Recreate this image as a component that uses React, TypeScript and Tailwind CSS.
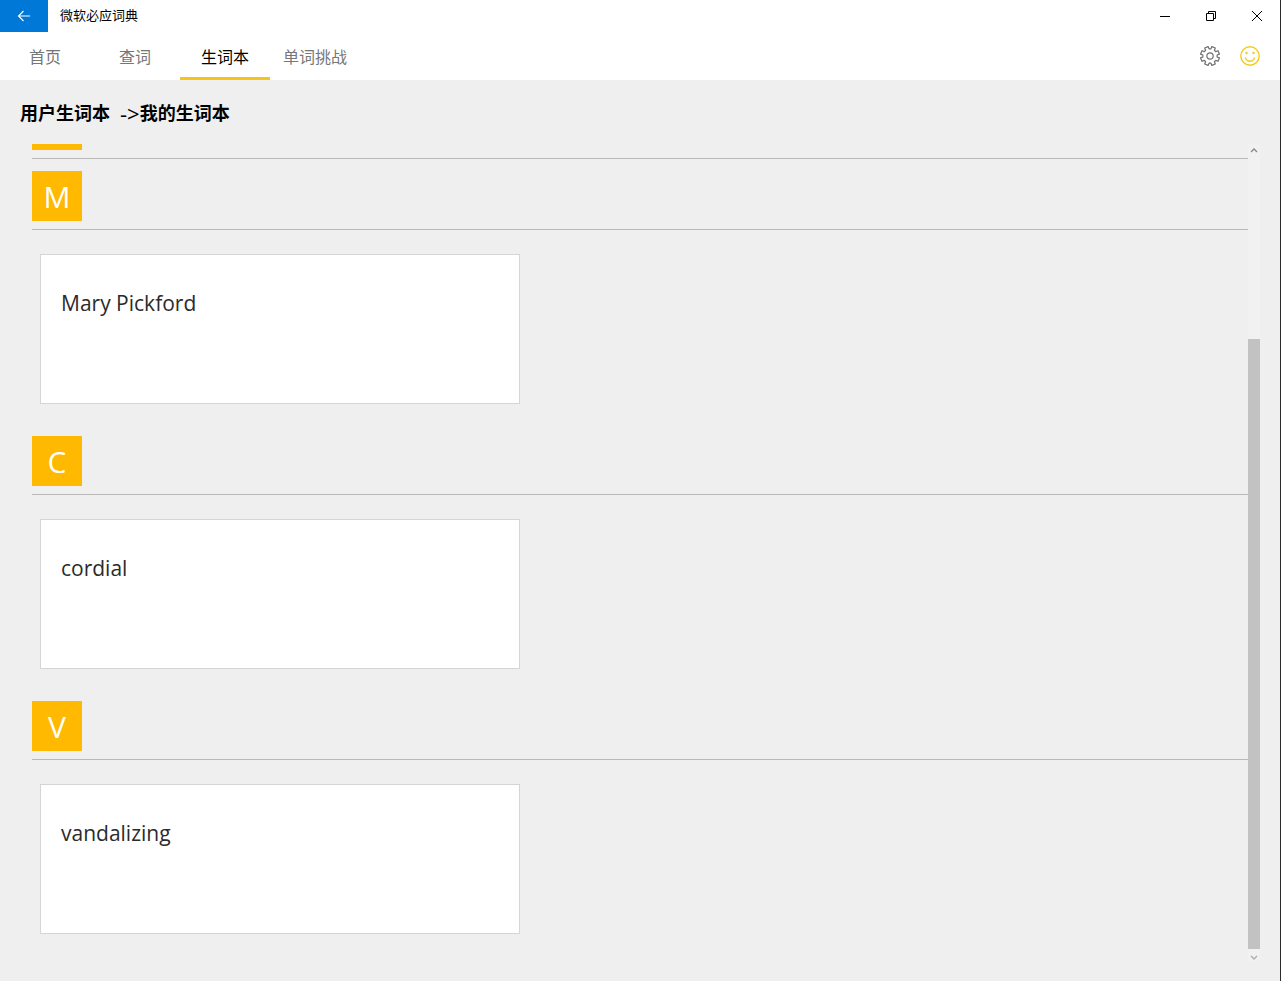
import React from 'react'

const tabs = [
  { name: '首页', active: false },
  { name: '查词', active: false },
  { name: '生词本', active: true },
  { name: '单词挑战', active: false },
]

const groups = [
  { letter: 'M', words: ['Mary Pickford'] },
  { letter: 'C', words: ['cordial'] },
  { letter: 'V', words: ['vandalizing'] },
]

// eight teeth, with a gap between two of them at the top
const gearPath = Array.from({ length: 8 }, (_, i) => {
  const point = (radius: number, degrees: number) => {
    const angle = ((i * 45 + 22.5 + degrees) * Math.PI) / 180
    return `${(10 + radius * Math.sin(angle)).toFixed(2)} ${(10 - radius * Math.cos(angle)).toFixed(2)}`
  }
  return `${i === 0 ? 'M' : 'L'}${point(7.2, -15)} L${point(9.6, -11)} L${point(9.6, 11)} L${point(7.2, 15)}`
}).join(' ') + ' Z'

const TitleBar = () => {
  return (
    <header className="flex h-8 items-center bg-white">
      <button aria-label="返回" className="flex h-8 w-12 items-center justify-center bg-[#0078d7] text-white">
        <svg width="14" height="12" viewBox="0 0 14 12" fill="none" stroke="currentColor" strokeWidth="1.1">
          <path d="M13 6H1.5M6.5 1L1.5 6l5 5" />
        </svg>
      </button>
      <span className="flex-1 pb-0.5 pl-3 text-[13px] leading-6 text-black">微软必应词典</span>
      <button aria-label="最小化" className="flex h-8 w-[46px] items-center justify-center">
        <svg width="10" height="10" viewBox="0 0 10 10" stroke="#000">
          <path d="M0 5.5h10" />
        </svg>
      </button>
      <button aria-label="还原" className="flex h-8 w-[46px] items-center justify-center">
        <svg width="10" height="10" viewBox="0 0 10 10" fill="none" stroke="#000">
          <path d="M.5 2.5h7v7h-7zM2.5 2.5v-2h7v7h-2" />
        </svg>
      </button>
      <button aria-label="关闭" className="flex h-8 w-[46px] items-center justify-center">
        <svg width="10" height="10" viewBox="0 0 10 10" stroke="#000">
          <path d="M0 0l10 10M10 0L0 10" />
        </svg>
      </button>
    </header>
  )
}

const NavBar = () => {
  return (
    <nav className="flex h-12 bg-white pr-5">
      {tabs.map((tab) => (
        <a
          key={tab.name}
          href="#"
          className={
            tab.active
              ? 'flex w-[90px] items-center justify-center border-b-3 border-[#f5c518] pt-1 text-base text-black'
              : 'flex w-[90px] items-center justify-center border-b-3 border-transparent pt-1 text-base text-[#767676]'
          }
        >
          {tab.name}
        </a>
      ))}
      <div className="ml-auto flex items-center gap-5">
        <button aria-label="设置">
          <svg width="20" height="20" viewBox="0 0 20 20" fill="none" stroke="#6f6f6f" strokeWidth="1.2" strokeLinejoin="round">
            <path d={gearPath} />
            <circle cx="10" cy="10" r="3.2" />
          </svg>
        </button>
        <button aria-label="用户">
          <svg width="20" height="20" viewBox="0 0 20 20" fill="none" stroke="#f2cb20" strokeWidth="1.4">
            <circle cx="10" cy="10" r="9.2" />
            <path d="M5.2 11.5c1 2.5 2.7 3.7 4.8 3.7s3.8-1.2 4.8-3.7" />
            <circle cx="6.5" cy="7" r="1.2" fill="#f2cb20" stroke="none" />
            <circle cx="13.5" cy="7" r="1.2" fill="#f2cb20" stroke="none" />
          </svg>
        </button>
      </div>
    </nav>
  )
}

const ScrollBar = () => {
  return (
    <div className="flex w-3 flex-col bg-[#f1f1f1]">
      <button aria-label="向上滚动" className="flex h-3 items-center justify-center">
        <svg width="8" height="5" viewBox="0 0 8 5" fill="none" stroke="#888" strokeWidth="1.3">
          <path d="M1 4l3-3 3 3" />
        </svg>
      </button>
      <div className="grow-[183] basis-0" />
      <div className="grow-[610] basis-0 bg-[#c2c2c2]" />
      <button aria-label="向下滚动" className="flex h-3 items-end justify-center pb-px">
        <svg width="8" height="5" viewBox="0 0 8 5" fill="none" stroke="#aaa" strokeWidth="1.3">
          <path d="M1 1l3 3 3-3" />
        </svg>
      </button>
    </div>
  )
}

const App = () => {
  return (
    <div className="flex min-h-screen flex-col border-r border-[#2b2b2b] bg-[#efefef] font-['Open_Sans','Noto_Sans_CJK_SC',sans-serif]">
      <TitleBar />
      <NavBar />
      <main className="flex flex-1 flex-col px-5 pb-5">
        <h1 className="flex h-16 items-center gap-2.5 pt-0.5 text-lg font-bold text-black">
          <span>用户生词本</span>
          <span className="flex items-center">
            <span className="text-[22px] leading-7 font-normal">-&gt;</span>
            <span>我的生词本</span>
          </span>
        </h1>
        <div className="flex flex-1">
          <div className="flex-1 pl-3">
            {/* end of the group that is scrolled off the top */}
            <div className="mb-3 border-b border-[#b9b9b9] pb-2">
              <div className="h-1.5 w-[50px] bg-[#ffb900]" />
            </div>
            {groups.map((group) => (
              <section key={group.letter} className="mb-8 last:mb-0">
                <div className="border-b border-[#b9b9b9] pb-2">
                  <h2 className="flex h-[50px] w-[50px] items-center justify-center bg-[#ffb900] pt-0.5 text-[30px] leading-none text-white">
                    {group.letter}
                  </h2>
                </div>
                <div className="px-2 pt-6">
                  {group.words.map((word) => (
                    <article key={word} className="h-[150px] w-[480px] border border-[#d5d5d5] bg-white px-5 pt-8">
                      <p className="text-[21px] leading-8 text-[#2b2b2b]">{word}</p>
                    </article>
                  ))}
                </div>
              </section>
            ))}
          </div>
          <ScrollBar />
        </div>
      </main>
    </div>
  )
}

export default App
